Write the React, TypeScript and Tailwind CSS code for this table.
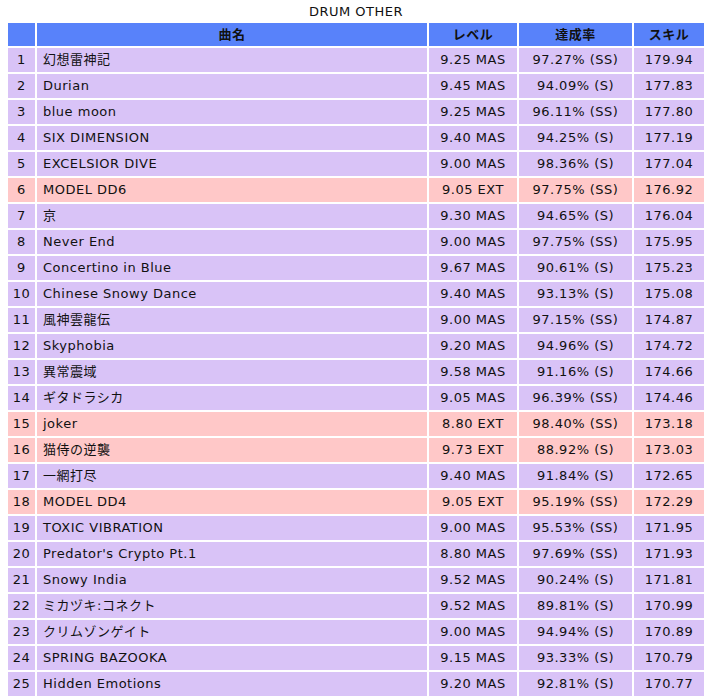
import React from "react";

type Row = [string, string, string, string, boolean?];

const rows: Row[] = [
  ["幻想雷神記", "9.25 MAS", "97.27% (SS)", "179.94"],
  ["Durian", "9.45 MAS", "94.09% (S)", "177.83"],
  ["blue moon", "9.25 MAS", "96.11% (SS)", "177.80"],
  ["SIX DIMENSION", "9.40 MAS", "94.25% (S)", "177.19"],
  ["EXCELSIOR DIVE", "9.00 MAS", "98.36% (S)", "177.04"],
  ["MODEL DD6", "9.05 EXT", "97.75% (SS)", "176.92", true],
  ["京", "9.30 MAS", "94.65% (S)", "176.04"],
  ["Never End", "9.00 MAS", "97.75% (SS)", "175.95"],
  ["Concertino in Blue", "9.67 MAS", "90.61% (S)", "175.23"],
  ["Chinese Snowy Dance", "9.40 MAS", "93.13% (S)", "175.08"],
  ["風神雲龍伝", "9.00 MAS", "97.15% (SS)", "174.87"],
  ["Skyphobia", "9.20 MAS", "94.96% (S)", "174.72"],
  ["異常震域", "9.58 MAS", "91.16% (S)", "174.66"],
  ["ギタドラシカ", "9.05 MAS", "96.39% (SS)", "174.46"],
  ["joker", "8.80 EXT", "98.40% (SS)", "173.18", true],
  ["猫侍の逆襲", "9.73 EXT", "88.92% (S)", "173.03", true],
  ["一網打尽", "9.40 MAS", "91.84% (S)", "172.65"],
  ["MODEL DD4", "9.05 EXT", "95.19% (SS)", "172.29", true],
  ["TOXIC VIBRATION", "9.00 MAS", "95.53% (SS)", "171.95"],
  ["Predator's Crypto Pt.1", "8.80 MAS", "97.69% (SS)", "171.93"],
  ["Snowy India", "9.52 MAS", "90.24% (S)", "171.81"],
  ["ミカヅキ:コネクト", "9.52 MAS", "89.81% (S)", "170.99"],
  ["クリムゾンゲイト", "9.00 MAS", "94.94% (S)", "170.89"],
  ["SPRING BAZOOKA", "9.15 MAS", "93.33% (S)", "170.79"],
  ["Hidden Emotions", "9.20 MAS", "92.81% (S)", "170.77"],
];

const App = () => {
  return (
    <div className="bg-white text-[13px] tracking-[0.5px] text-[#111] font-['DejaVu_Sans','Noto_Sans_CJK_JP',sans-serif]">
      <div className="h-[21px] pt-[4px] leading-[16px] text-center pr-[2px]">DRUM OTHER</div>
      <table className="ml-[6px] w-[700px] border-separate border-spacing-[2px] table-fixed">
        <colgroup>
          <col className="w-[27px]" />
          <col className="w-[390px]" />
          <col className="w-[88px]" />
          <col className="w-[113px]" />
          <col className="w-[70px]" />
        </colgroup>
        <thead>
          <tr className="bg-[#5882fa] h-[23px] leading-[16px]">
            <th className="p-0"></th>
            <th className="p-0 font-bold">曲名</th>
            <th className="p-0 font-bold">レベル</th>
            <th className="p-0 font-bold">達成率</th>
            <th className="p-0 font-bold">スキル</th>
          </tr>
        </thead>
        <tbody>
          {rows.map((r, i) => (
            <tr key={i} className={`h-[24px] leading-[16px] ${r[4] ? "bg-[#ffc8c8]" : "bg-[#d9c3f7]"}`}>
              <td className="p-0 text-center">{i + 1}</td>
              <td className="p-0 pl-[6px] whitespace-nowrap">{r[0]}</td>
              <td className="p-0 text-center">{r[1]}</td>
              <td className="p-0 text-center">{r[2]}</td>
              <td className="p-0 text-center">{r[3]}</td>
            </tr>
          ))}
        </tbody>
      </table>
    </div>
  );
};

export default App;
